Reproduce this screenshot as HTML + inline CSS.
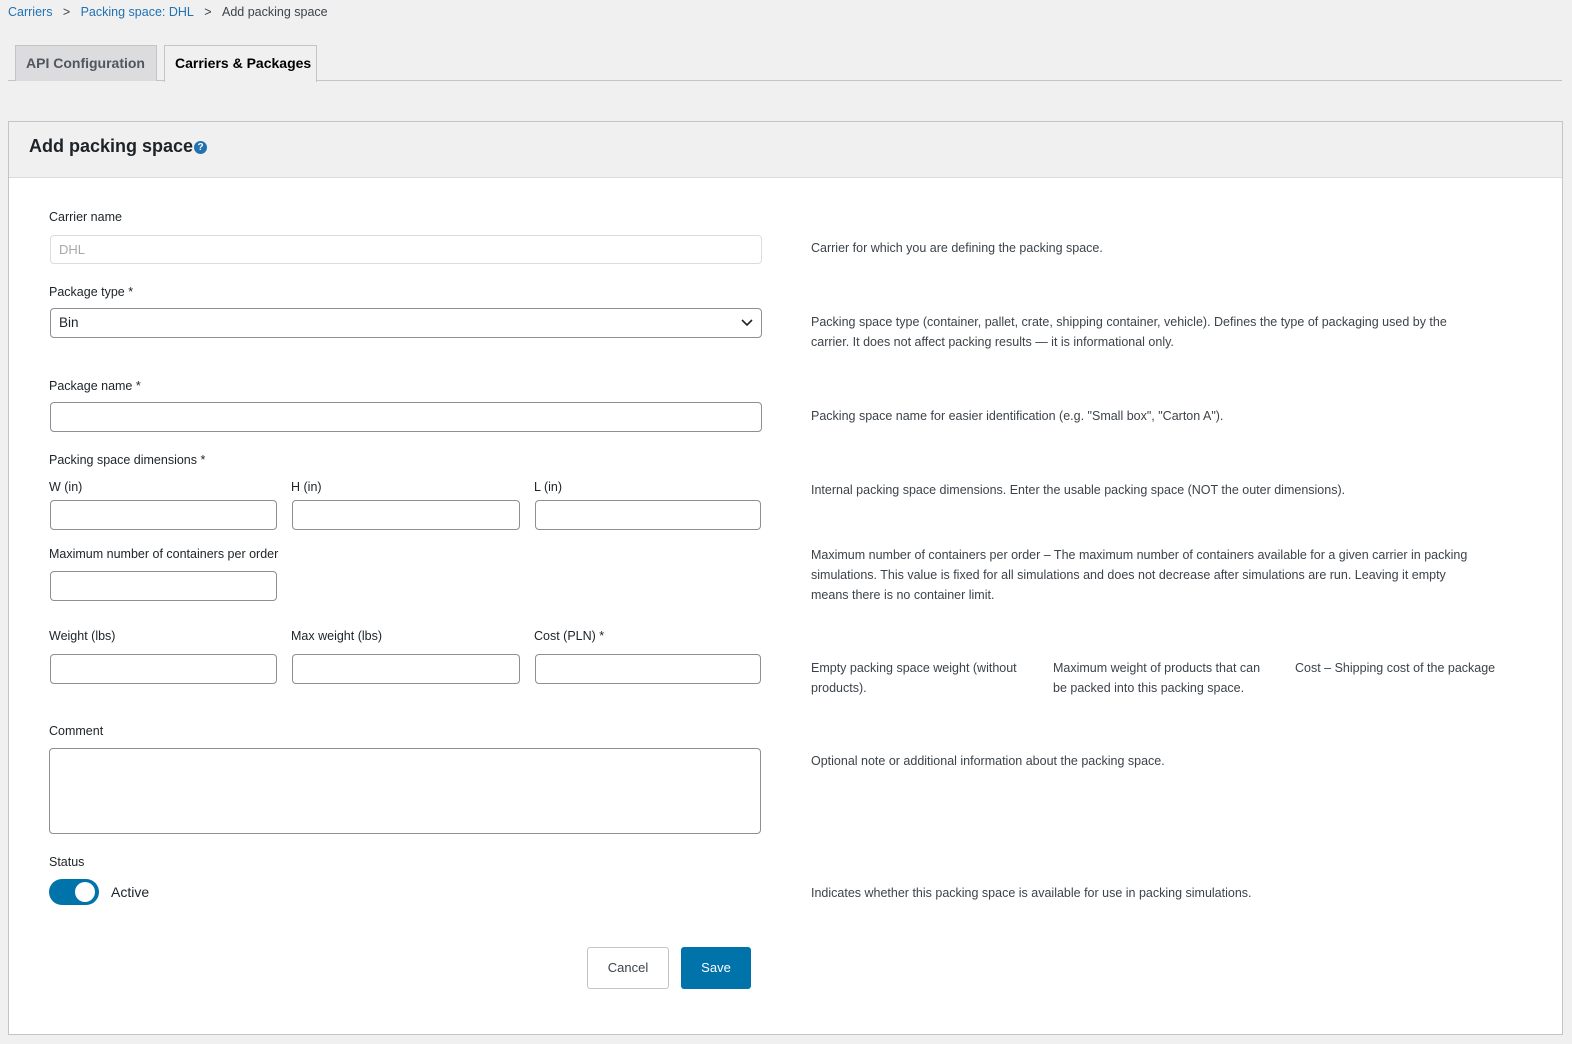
<!DOCTYPE html>
<html><head><meta charset="utf-8"><style>
*{box-sizing:border-box;margin:0;padding:0}
body{width:1572px;height:1044px;background:#f0f0f1;font-family:"Liberation Sans",sans-serif;color:#3c434a;position:relative;overflow:hidden;font-size:12.5px}
.a{position:absolute;white-space:nowrap}
.lnk{color:#2271b1}
.tab{position:absolute;top:45px;height:36px;font-weight:bold;font-size:14px;line-height:34px;padding:0 10px;border:1px solid #c3c4c7;border-bottom:none;white-space:nowrap}
.inp{position:absolute;background:#fff;border:1px solid #8c8f94;border-radius:4px;height:30px}
.lab{position:absolute;white-space:nowrap;color:#1d2327;font-size:12.5px}
.d{position:absolute;white-space:nowrap;font-size:12.5px;line-height:20px;color:#3c434a}
</style></head><body>
<div class="a" style="left:8px;top:5px;font-size:12.5px"><span class="lnk">Carriers</span>&nbsp;&nbsp; &gt; &nbsp;&nbsp;<span class="lnk">Packing space: DHL</span>&nbsp;&nbsp; &gt; &nbsp;&nbsp;Add packing space</div>
<div class="a" style="left:8px;top:80px;width:1554px;height:1px;background:#c3c4c7"></div>
<div class="tab" style="left:15px;width:142px;background:#dcdcde;color:#50575e">API Configuration</div>
<div class="tab" style="left:164px;width:153px;background:#f0f0f1;color:#000;height:37px">Carriers &amp; Packages</div>
<div class="a" style="left:8px;top:121px;width:1555px;height:914px;background:#fff;border:1px solid #c3c4c7"></div>
<div class="a" style="left:9px;top:122px;width:1553px;height:56px;background:#f0f0f1;border-bottom:1px solid #dcdcde"></div>
<div class="a" style="left:29px;top:136px;font-size:18px;font-weight:bold;color:#1d2327">Add packing space</div>
<div class="a" style="left:194px;top:141px;width:13px;height:13px;border-radius:50%;background:#2271b1;color:#fff;font-size:10px;font-weight:bold;text-align:center;line-height:13px">?</div>

<div class="lab" style="left:49px;top:210px">Carrier name</div>
<div class="inp" style="left:50px;top:235px;width:712px;height:29px;border-color:#dcdcde"></div>
<div class="a" style="left:59px;top:242px;color:#a7aaad;font-size:13px">DHL</div>
<div class="d" style="left:811px;top:238px">Carrier for which you are defining the packing space.</div>

<div class="lab" style="left:49px;top:285px">Package type *</div>
<div class="inp" style="left:50px;top:308px;width:712px"></div>
<div class="a" style="left:59px;top:315px;color:#1d2327;font-size:13.5px">Bin</div>
<svg class="a" style="left:741px;top:318px" width="12" height="10"><path d="M1 2l5 5 5-5" fill="none" stroke="#1d2327" stroke-width="1.6"/></svg>
<div class="d" style="left:811px;top:312px">Packing space type (container, pallet, crate, shipping container, vehicle). Defines the type of packaging used by the<br>carrier. It does not affect packing results — it is informational only.</div>

<div class="lab" style="left:49px;top:379px">Package name *</div>
<div class="inp" style="left:50px;top:402px;width:712px"></div>
<div class="d" style="left:811px;top:406px">Packing space name for easier identification (e.g. "Small box", "Carton A").</div>

<div class="lab" style="left:49px;top:453px">Packing space dimensions *</div>
<div class="lab" style="left:49px;top:480px">W (in)</div>
<div class="lab" style="left:291px;top:480px">H (in)</div>
<div class="lab" style="left:534px;top:480px">L (in)</div>
<div class="inp" style="left:50px;top:500px;width:227px"></div>
<div class="inp" style="left:292px;top:500px;width:228px"></div>
<div class="inp" style="left:535px;top:500px;width:226px"></div>
<div class="d" style="left:811px;top:480px">Internal packing space dimensions. Enter the usable packing space (NOT the outer dimensions).</div>

<div class="lab" style="left:49px;top:547px">Maximum number of containers per order</div>
<div class="inp" style="left:50px;top:571px;width:227px"></div>
<div class="d" style="left:811px;top:545px">Maximum number of containers per order – The maximum number of containers available for a given carrier in packing<br>simulations. This value is fixed for all simulations and does not decrease after simulations are run. Leaving it empty<br>means there is no container limit.</div>

<div class="lab" style="left:49px;top:629px">Weight (lbs)</div>
<div class="lab" style="left:291px;top:629px">Max weight (lbs)</div>
<div class="lab" style="left:534px;top:629px">Cost (PLN) *</div>
<div class="inp" style="left:50px;top:654px;width:227px"></div>
<div class="inp" style="left:292px;top:654px;width:228px"></div>
<div class="inp" style="left:535px;top:654px;width:226px"></div>
<div class="d" style="left:811px;top:658px">Empty packing space weight (without<br>products).</div>
<div class="d" style="left:1053px;top:658px">Maximum weight of products that can<br>be packed into this packing space.</div>
<div class="d" style="left:1295px;top:658px">Cost – Shipping cost of the package</div>

<div class="lab" style="left:49px;top:724px">Comment</div>
<div class="inp" style="left:49px;top:748px;width:712px;height:86px"></div>
<div class="d" style="left:811px;top:751px">Optional note or additional information about the packing space.</div>

<div class="lab" style="left:49px;top:855px">Status</div>
<div class="a" style="left:49px;top:879px;width:50px;height:26px;border-radius:13px;background:#0073aa"></div>
<div class="a" style="left:75px;top:882px;width:20px;height:20px;border-radius:50%;background:#fff"></div>
<div class="a" style="left:111px;top:884px;font-size:14px;color:#1d2327">Active</div>
<div class="d" style="left:811px;top:883px">Indicates whether this packing space is available for use in packing simulations.</div>

<div class="a" style="left:587px;top:947px;width:82px;height:42px;border:1px solid #c3c4c7;border-radius:3px;background:#fff;text-align:center;line-height:40px;font-size:13px;color:#3c434a">Cancel</div>
<div class="a" style="left:681px;top:947px;width:70px;height:42px;border-radius:3px;background:#0073aa;text-align:center;line-height:42px;font-size:13px;color:#fff">Save</div>
</body></html>
